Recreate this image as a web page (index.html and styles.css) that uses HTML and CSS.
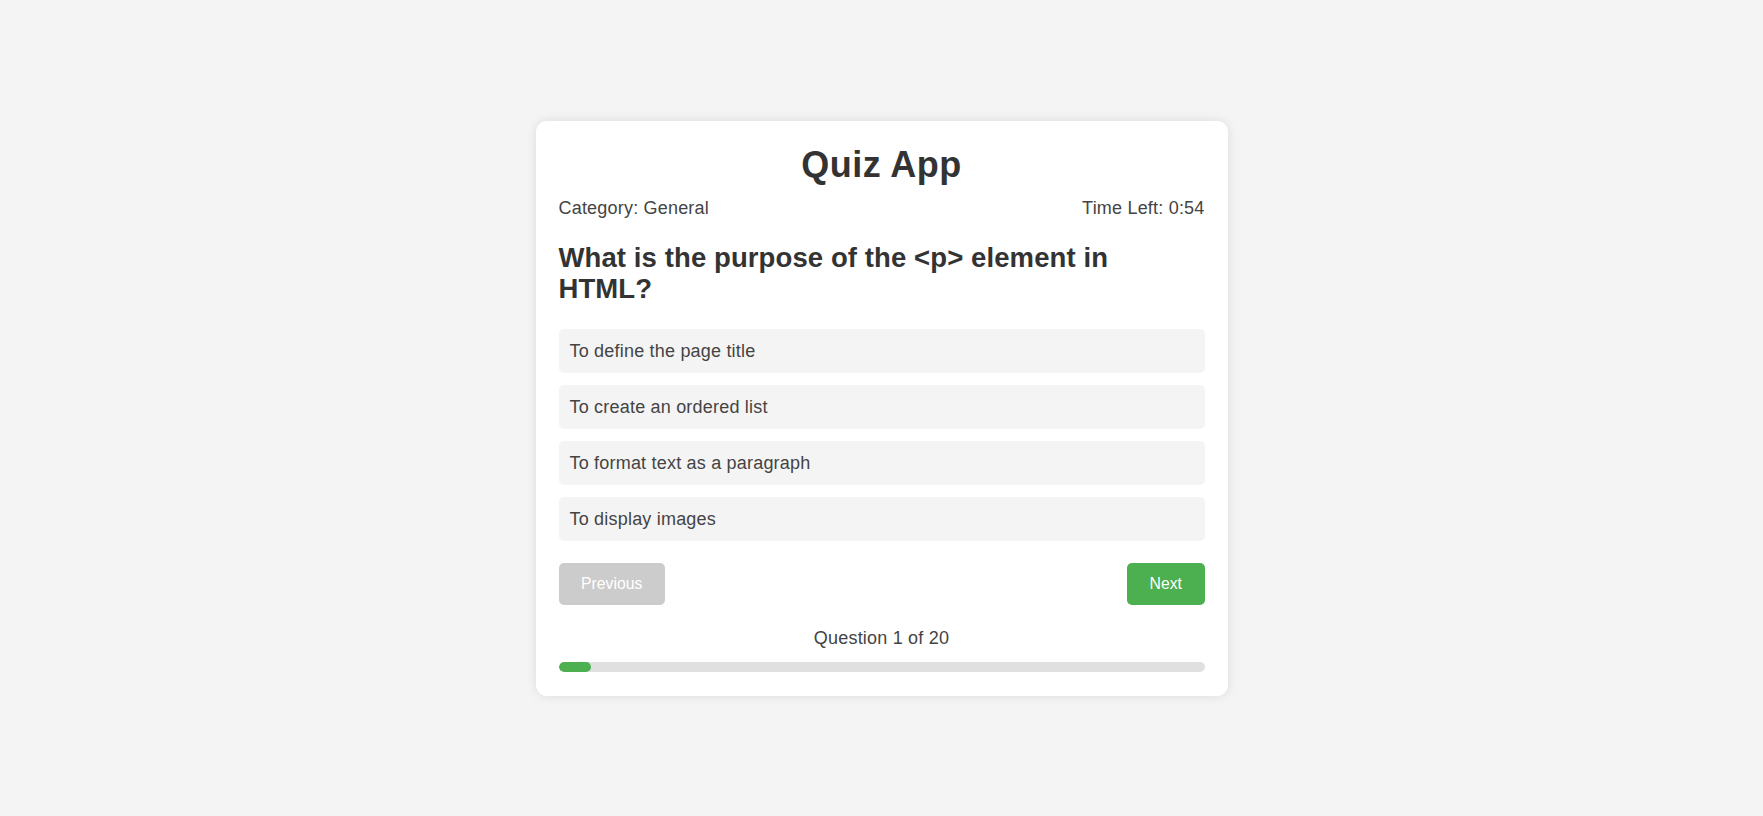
FILE: index.html
```html
<!DOCTYPE html>
<html lang="en">
<head>
<meta charset="utf-8">
<title>Quiz App</title>
<link rel="stylesheet" href="styles.css">
</head>
<body>
  <main class="quiz-card">
    <h1 class="quiz-title">Quiz App</h1>
    <div class="quiz-info">
      <span class="quiz-category">Category: General</span>
      <span class="quiz-timer">Time Left: 0:54</span>
    </div>
    <h2 class="quiz-question">What is the purpose of the &lt;p&gt; element in HTML?</h2>
    <ul class="quiz-options">
      <li class="quiz-option">To define the page title</li>
      <li class="quiz-option">To create an ordered list</li>
      <li class="quiz-option">To format text as a paragraph</li>
      <li class="quiz-option">To display images</li>
    </ul>
    <div class="quiz-nav">
      <button class="btn btn-prev" disabled>Previous</button>
      <button class="btn btn-next">Next</button>
    </div>
    <p class="quiz-counter">Question 1 of 20</p>
    <div class="progress">
      <div class="progress-fill" style="width: 5%"></div>
    </div>
  </main>
</body>
</html>
```

FILE: styles.css
```css
* {
  box-sizing: border-box;
}

html, body {
  margin: 0;
  padding: 0;
}

body {
  font-family: "Liberation Sans", Arial, sans-serif;
  background: #f4f4f4;
  color: #333;
  min-height: 100vh;
  display: flex;
  align-items: center;
  justify-content: center;
}

.quiz-card {
  width: 692px;
  background: #fff;
  border-radius: 11px;
  box-shadow: 0 0 11px rgba(0, 0, 0, 0.1);
  padding: 23px 23px 24px;
}

.quiz-title {
  margin: 0 0 13px;
  font-size: 36px;
  line-height: 41px;
  letter-spacing: 0.5px;
  text-align: center;
  color: #333;
}

.quiz-info {
  display: flex;
  justify-content: space-between;
  font-size: 18px;
  line-height: 21px;
  letter-spacing: 0.2px;
  color: #444;
}

.quiz-question {
  margin: 23px 0 25px;
  font-size: 27.5px;
  line-height: 31px;
  letter-spacing: 0.1px;
  color: #333;
  padding-right: 60px;
}

.quiz-options {
  list-style: none;
  margin: 0;
  padding: 0;
  display: flex;
  flex-direction: column;
  gap: 12px;
}

.quiz-option {
  background: #f4f4f4;
  border-radius: 5px;
  padding: 11px 11px;
  font-size: 18px;
  line-height: 22px;
  letter-spacing: 0.2px;
  color: #444;
}

.quiz-nav {
  display: flex;
  justify-content: space-between;
  margin-top: 22px;
}

.btn {
  font-family: "Liberation Sans", Arial, sans-serif;
  font-size: 15.75px;
  line-height: 18px;
  height: 42px;
  padding: 0 22.5px;
  border: none;
  border-radius: 5px;
  color: #fff;
}

.btn-prev {
  background: #ccc;
}

.btn-next {
  background: #4caf50;
}

.quiz-counter {
  margin: 23px 0 13px;
  text-align: center;
  font-size: 18px;
  line-height: 21px;
  letter-spacing: 0.2px;
  color: #444;
}

.progress {
  height: 10px;
  background: #e0e0e0;
  border-radius: 5px;
  overflow: hidden;
}

.progress-fill {
  height: 100%;
  background: #4caf50;
  border-radius: 5px;
}
```
